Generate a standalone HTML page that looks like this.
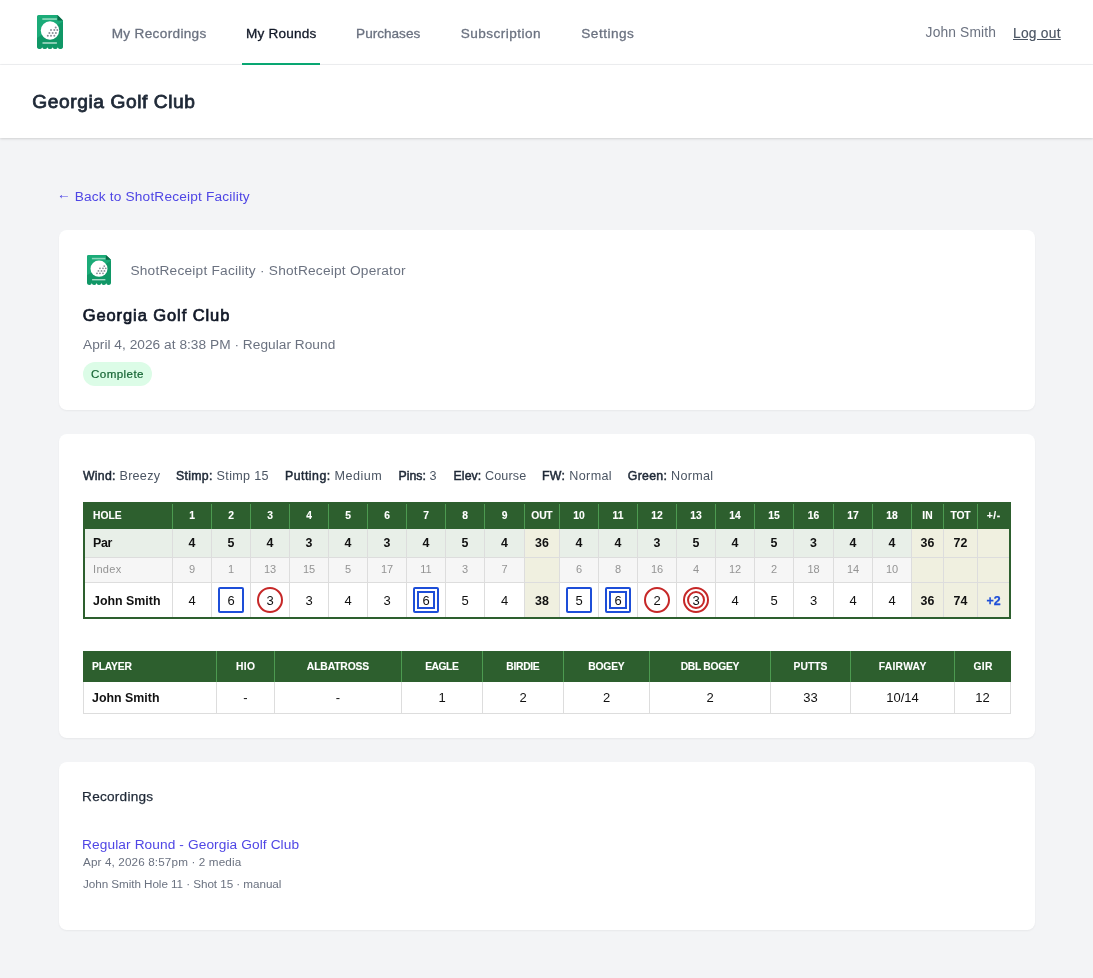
<!DOCTYPE html>
<html lang="en">
<head>
<meta charset="utf-8">
<title>Georgia Golf Club</title>
<style>
*{box-sizing:border-box;margin:0;padding:0}
html,body{width:1093px;height:978px;overflow:hidden}
body{font-family:"Liberation Sans",sans-serif;background:#f3f4f6;color:#111827;position:relative;will-change:transform}
a{text-decoration:none;color:inherit}
.t{position:absolute;white-space:nowrap;line-height:1}
/* NAV */
nav{position:absolute;left:0;top:0;width:1093px;height:65px;background:#fff;border-bottom:1px solid #f0f1f3}
.navlink{font-size:13.6px;color:#6b7280;-webkit-text-stroke-width:.3px}
.navlink.active{color:#111827}
.activebar{position:absolute;left:242px;top:63px;width:78px;height:2px;background:#0aa974}
/* HEADER */
header{position:absolute;left:0;top:65px;width:1093px;height:73px;background:#fff;box-shadow:0 1px 3px rgba(0,0,0,.10),0 1px 2px rgba(0,0,0,.06)}
.card{position:absolute;left:59px;width:976px;background:#fff;border-radius:8px;box-shadow:0 1px 2px rgba(0,0,0,.05)}

/* back link */
.back{font-size:13.7px;color:#4f46e5}
/* card1 */
#card1{top:230px;height:180px}
#card2{top:434px;height:304px}
#card3{top:762px;height:168px}
.muted{color:#6b7280}
.badge{position:absolute;left:24px;top:132px;width:69px;height:24px;border-radius:12px;background:#dcfce7}
/* conditions */
.cond{font-size:12.6px;color:#4b5563}
.cond b{color:#1f2937;font-size:12.3px}
/* scorecard */
.sc{position:absolute;left:24px;top:68px;width:928px;border:2px solid #2d5f2e;background:#fff}
.r{display:flex}
.c{flex:none;text-align:center;border-right:1px solid #ddd;white-space:nowrap;overflow:visible}
.c.first{text-align:left;padding-left:8px}
.c.last{border-right:0}
.sb,.cond b{font-weight:normal;-webkit-text-stroke-width:.5px}
.sc .hd .c,.st .hd .c{font-weight:bold;-webkit-text-stroke-width:.1px}
.sc .par .c,.sc .pl .c.first,.sc .pl .c.tot,.st .bd .c.first{font-weight:bold}
.sc .hd .c{height:25px;line-height:23px;background:#2d5f2e;color:#fff;font-size:10.3px;border-right-color:#4c9a50}
.sc .hd .c.last{border-right:0}
.sc .par .c{height:29px;line-height:28px;background:#e8efe8;font-size:12.4px;color:#111;border-bottom:1px solid #ddd}
.sc .idx .c{height:25px;line-height:22px;background:#f6f6f6;font-size:11px;color:#949494;border-bottom:1px solid #ddd}
.sc .pl .c{height:34px;line-height:34px;padding-top:1px;font-size:13px;color:#111;display:flex;align-items:center;justify-content:center}
.sc .pl .c.first{justify-content:flex-start}
.sc .pl .c.first,.sc .pl .c.tot,.st .bd .c.first{font-size:12.4px}
.sc .c.tot{background:#f0f0e0}
.sc .hd .c.tot{background:#2d5f2e}
.mk{display:flex;align-items:center;justify-content:center;width:26px;height:26px;margin-top:-1px;border:2px solid #1d4ed8;line-height:1}
.mk.sq{border-radius:2px}
.mk.ci{border-color:#c62828;border-radius:50%}
.in{display:flex;align-items:center;justify-content:center;width:18px;height:18px;border:2px solid #1d4ed8;line-height:1}
.in.ci{border-color:#c62828;border-radius:50%}
.sc .pl .c.pm{color:#1d4ed8;-webkit-text-stroke-width:.25px}
/* stats */
.st{position:absolute;left:24px;top:217px;width:928px}
.st .hd .c{height:31px;line-height:31px;background:#2d5f2e;color:#fff;font-size:10.3px;border-right-color:#4c9a50}
.st .hd .c.last{border-right:0}
.st .bd .c{height:32px;line-height:32px;font-size:13px;color:#111;border-bottom:1px solid #ddd}
.st .bd .c.first{border-left:1px solid #ddd;padding-left:8px}
.st .bd .c.last{border-right:1px solid #ddd}
.st .hd .c.first{padding-left:9px}
</style>
</head>
<body>
<svg width="0" height="0" style="position:absolute"><defs><symbol id="lg" viewBox="0 0 26 34">
    <path d="M1.5 0H20.5L26 5.5V31.5a2.6 2.45 0 0 1 -5.2 0a2.6 2.45 0 0 1 -5.2 0a2.6 2.45 0 0 1 -5.2 0a2.6 2.45 0 0 1 -5.2 0a2.6 2.45 0 0 1 -5.2 0V1.5Q0 0 1.5 0Z" fill="#1bab78"/>
    <path d="M0 23L26 6.5V31.5a2.6 2.45 0 0 1 -5.2 0a2.6 2.45 0 0 1 -5.2 0a2.6 2.45 0 0 1 -5.2 0a2.6 2.45 0 0 1 -5.2 0a2.6 2.45 0 0 1 -5.2 0Z" fill="#0c8f60" opacity=".72"/>
    <path d="M20.5 0L26 5.5H20.5Z" fill="#0a6a47"/>
    <rect x="5.3" y="3.2" width="14.6" height="1.7" fill="#8ad6ba"/>
    <rect x="5.5" y="27.2" width="14.4" height="1.6" fill="#a5d9c6"/>
    <circle cx="13" cy="15.5" r="9.2" fill="#fff"/>
    <g fill="#8a8f98">
      <circle cx="18.7" cy="12.5" r="1"/>
      <circle cx="14" cy="15.1" r="1"/><circle cx="17.3" cy="15.1" r="1"/><circle cx="20.3" cy="15.1" r="1"/>
      <circle cx="12.4" cy="18" r="1"/><circle cx="15.7" cy="18" r="1"/><circle cx="18.9" cy="18" r="1"/>
      <circle cx="10.8" cy="20.7" r="1"/><circle cx="14" cy="20.7" r="1"/><circle cx="17.3" cy="20.7" r="1"/>
    </g>
  </symbol></defs></svg>
<nav>
  <svg style="position:absolute;left:37px;top:15px" width="26" height="34" viewBox="0 0 26 34"><use href="#lg"/></svg>
  <a class="t navlink" id="n1" style="top:27px;left:111.7px;letter-spacing:0.33px">My Recordings</a>
  <a class="t navlink active" id="n2" style="top:27px;left:246px;letter-spacing:0.2px">My Rounds</a>
  <a class="t navlink" id="n3" style="top:27px;left:356.1px;letter-spacing:-0.01px">Purchases</a>
  <a class="t navlink" id="n4" style="top:27px;left:460.7px;letter-spacing:0.46px">Subscription</a>
  <a class="t navlink" id="n5" style="top:27px;left:581.3px;letter-spacing:0.48px">Settings</a>
  <div class="activebar"></div>
  <span class="t navlink" id="n6" style="top:26px;left:925.6px;letter-spacing:0.15px;font-size:13.8px;-webkit-text-stroke-width:0">John Smith</span>
  <a class="t navlink" id="n7" style="top:27px;left:1013px;color:#4b5563;text-decoration:underline;letter-spacing:0.25px;font-size:13.8px;-webkit-text-stroke-width:.15px">Log out</a>
</nav>
<header>
  <h2 class="t" id="h1" style="left:32.3px;top:27px;font-size:19.2px;font-weight:normal;-webkit-text-stroke:0.8px #1f2937;color:#1f2937;letter-spacing:0.57px">Georgia Golf Club</h2>
</header>

<a class="t back" id="bk" style="left:56.9px;top:190px;letter-spacing:0.17px"><span style="position:relative;top:-1.7px">←</span> Back to ShotReceipt Facility</a>
<section class="card" id="card1">
  <svg style="position:absolute;left:28px;top:25px" width="24" height="30" viewBox="0 0 26 34" preserveAspectRatio="none"><use href="#lg"/></svg>
  <span class="t muted" id="c1a" style="left:71.4px;top:34px;font-size:13.7px;letter-spacing:0.23px">ShotReceipt Facility · ShotReceipt Operator</span>
  <h3 class="t" id="c1b" style="left:23.7px;top:77px;font-size:16.5px;font-weight:normal;-webkit-text-stroke-width:.7px;color:#111827;letter-spacing:0.91px">Georgia Golf Club</h3>
  <span class="t muted" id="c1c" style="left:24px;top:108px;font-size:13.7px;letter-spacing:0.03px">April 4, 2026 at 8:38 PM · Regular Round</span>
  <div class="badge"></div>
  <span class="t" id="c1d" style="left:32px;top:138px;font-size:11.6px;color:#166534;letter-spacing:0.41px;-webkit-text-stroke-width:.2px">Complete</span>
</section>
<section class="card" id="card2">
  <span class="t cond" id="k1" style="top:36px;left:24px;letter-spacing:0.26px"><b>Wind:</b> Breezy</span>
  <span class="t cond" id="k2" style="top:36px;left:117px;letter-spacing:0.32px"><b>Stimp:</b> Stimp 15</span>
  <span class="t cond" id="k3" style="top:36px;left:226px;letter-spacing:0.49px"><b>Putting:</b> Medium</span>
  <span class="t cond" id="k4" style="top:36px;left:339.6px;letter-spacing:0px"><b>Pins:</b> 3</span>
  <span class="t cond" id="k5" style="top:36px;left:394.5px;letter-spacing:0.11px"><b>Elev:</b> Course</span>
  <span class="t cond" id="k6" style="top:36px;left:483px;letter-spacing:0.36px"><b>FW:</b> Normal</span>
  <span class="t cond" id="k7" style="top:36px;left:568.8px;letter-spacing:0.3px"><b>Green:</b> Normal</span>
<!--T0--><div class="sc">
<div class="r hd">
<div class="c first" style="width:88px"><span id="sh0">HOLE</span></div>
<div class="c" style="width:39px"><span id="sh1">1</span></div>
<div class="c" style="width:39px"><span id="sh2">2</span></div>
<div class="c" style="width:39px"><span id="sh3">3</span></div>
<div class="c" style="width:39px"><span id="sh4">4</span></div>
<div class="c" style="width:39px"><span id="sh5">5</span></div>
<div class="c" style="width:39px"><span id="sh6">6</span></div>
<div class="c" style="width:39px"><span id="sh7">7</span></div>
<div class="c" style="width:39px"><span id="sh8">8</span></div>
<div class="c" style="width:40px"><span id="sh9">9</span></div>
<div class="c tot" style="width:35px"><span id="sh10" style="letter-spacing:-0.2px;margin-right:0.2px">OUT</span></div>
<div class="c" style="width:39px"><span id="sh11">10</span></div>
<div class="c" style="width:39px"><span id="sh12">11</span></div>
<div class="c" style="width:39px"><span id="sh13">12</span></div>
<div class="c" style="width:39px"><span id="sh14">13</span></div>
<div class="c" style="width:39px"><span id="sh15">14</span></div>
<div class="c" style="width:39px"><span id="sh16">15</span></div>
<div class="c" style="width:40px"><span id="sh17">16</span></div>
<div class="c" style="width:39px"><span id="sh18">17</span></div>
<div class="c" style="width:39px"><span id="sh19">18</span></div>
<div class="c tot" style="width:32px"><span id="sh20">IN</span></div>
<div class="c tot" style="width:34px"><span id="sh21" style="letter-spacing:-0.1px;margin-right:0.1px">TOT</span></div>
<div class="c tot last" style="width:31px"><span id="sh22" style="letter-spacing:0.5px;margin-right:-0.5px">+/-</span></div>
</div>
<div class="r par">
<div class="c first" style="width:88px"><span id="sp0" style="letter-spacing:-0.3px;margin-right:0.3px">Par</span></div>
<div class="c" style="width:39px"><span id="sp1">4</span></div>
<div class="c" style="width:39px"><span id="sp2">5</span></div>
<div class="c" style="width:39px"><span id="sp3">4</span></div>
<div class="c" style="width:39px"><span id="sp4">3</span></div>
<div class="c" style="width:39px"><span id="sp5">4</span></div>
<div class="c" style="width:39px"><span id="sp6">3</span></div>
<div class="c" style="width:39px"><span id="sp7">4</span></div>
<div class="c" style="width:39px"><span id="sp8">5</span></div>
<div class="c" style="width:40px"><span id="sp9">4</span></div>
<div class="c tot" style="width:35px"><span id="sp10">36</span></div>
<div class="c" style="width:39px"><span id="sp11">4</span></div>
<div class="c" style="width:39px"><span id="sp12">4</span></div>
<div class="c" style="width:39px"><span id="sp13">3</span></div>
<div class="c" style="width:39px"><span id="sp14">5</span></div>
<div class="c" style="width:39px"><span id="sp15">4</span></div>
<div class="c" style="width:39px"><span id="sp16">5</span></div>
<div class="c" style="width:40px"><span id="sp17">3</span></div>
<div class="c" style="width:39px"><span id="sp18">4</span></div>
<div class="c" style="width:39px"><span id="sp19">4</span></div>
<div class="c tot" style="width:32px"><span id="sp20">36</span></div>
<div class="c tot" style="width:34px"><span id="sp21">72</span></div>
<div class="c tot last" style="width:31px"></div>
</div>
<div class="r idx">
<div class="c first" style="width:88px"><span id="si0" style="letter-spacing:0.34px;margin-right:-0.34px">Index</span></div>
<div class="c" style="width:39px"><span id="si1">9</span></div>
<div class="c" style="width:39px"><span id="si2">1</span></div>
<div class="c" style="width:39px"><span id="si3">13</span></div>
<div class="c" style="width:39px"><span id="si4">15</span></div>
<div class="c" style="width:39px"><span id="si5">5</span></div>
<div class="c" style="width:39px"><span id="si6">17</span></div>
<div class="c" style="width:39px"><span id="si7">11</span></div>
<div class="c" style="width:39px"><span id="si8">3</span></div>
<div class="c" style="width:40px"><span id="si9">7</span></div>
<div class="c tot" style="width:35px"></div>
<div class="c" style="width:39px"><span id="si11">6</span></div>
<div class="c" style="width:39px"><span id="si12">8</span></div>
<div class="c" style="width:39px"><span id="si13">16</span></div>
<div class="c" style="width:39px"><span id="si14">4</span></div>
<div class="c" style="width:39px"><span id="si15">12</span></div>
<div class="c" style="width:39px"><span id="si16">2</span></div>
<div class="c" style="width:40px"><span id="si17">18</span></div>
<div class="c" style="width:39px"><span id="si18">14</span></div>
<div class="c" style="width:39px"><span id="si19">10</span></div>
<div class="c tot" style="width:32px"></div>
<div class="c tot" style="width:34px"></div>
<div class="c tot last" style="width:31px"></div>
</div>
<div class="r pl">
<div class="c first" style="width:88px"><span id="sl0">John Smith</span></div>
<div class="c" style="width:39px"><span id="sl1">4</span></div>
<div class="c" style="width:39px"><span class="mk sq"><span id="sl2">6</span></span></div>
<div class="c" style="width:39px"><span class="mk ci"><span id="sl3">3</span></span></div>
<div class="c" style="width:39px"><span id="sl4">3</span></div>
<div class="c" style="width:39px"><span id="sl5">4</span></div>
<div class="c" style="width:39px"><span id="sl6">3</span></div>
<div class="c" style="width:39px"><span class="mk sq"><span class="in sq"><span id="sl7">6</span></span></span></div>
<div class="c" style="width:39px"><span id="sl8">5</span></div>
<div class="c" style="width:40px"><span id="sl9">4</span></div>
<div class="c tot" style="width:35px"><span id="sl10">38</span></div>
<div class="c" style="width:39px"><span class="mk sq"><span id="sl11">5</span></span></div>
<div class="c" style="width:39px"><span class="mk sq"><span class="in sq"><span id="sl12">6</span></span></span></div>
<div class="c" style="width:39px"><span class="mk ci"><span id="sl13">2</span></span></div>
<div class="c" style="width:39px"><span class="mk ci"><span class="in ci"><span id="sl14">3</span></span></span></div>
<div class="c" style="width:39px"><span id="sl15">4</span></div>
<div class="c" style="width:39px"><span id="sl16">5</span></div>
<div class="c" style="width:40px"><span id="sl17">3</span></div>
<div class="c" style="width:39px"><span id="sl18">4</span></div>
<div class="c" style="width:39px"><span id="sl19">4</span></div>
<div class="c tot" style="width:32px"><span id="sl20">36</span></div>
<div class="c tot" style="width:34px"><span id="sl21">74</span></div>
<div class="c tot last pm" style="width:31px"><span id="sl22">+2</span></div>
</div>
</div>
<div class="st">
<div class="r hd">
<div class="c first" style="width:134px"><span id="th0" style="letter-spacing:-0.18px;margin-right:0.18px">PLAYER</span></div>
<div class="c" style="width:58px"><span id="th1" style="letter-spacing:0.3px;margin-right:-0.3px">HIO</span></div>
<div class="c" style="width:127px"><span id="th2" style="letter-spacing:-0.13px;margin-right:0.13px">ALBATROSS</span></div>
<div class="c" style="width:81px"><span id="th3" style="letter-spacing:-0.45px;margin-right:0.45px">EAGLE</span></div>
<div class="c" style="width:81px"><span id="th4" style="letter-spacing:-0.29px;margin-right:0.29px">BIRDIE</span></div>
<div class="c" style="width:86px"><span id="th5" style="letter-spacing:-0.21px;margin-right:0.21px">BOGEY</span></div>
<div class="c" style="width:121px"><span id="th6" style="letter-spacing:-0.29px;margin-right:0.29px">DBL BOGEY</span></div>
<div class="c" style="width:80px"><span id="th7">PUTTS</span></div>
<div class="c" style="width:104px"><span id="th8" style="letter-spacing:0.3px;margin-right:-0.3px">FAIRWAY</span></div>
<div class="c last" style="width:56px"><span id="th9" style="letter-spacing:0.25px;margin-right:-0.25px">GIR</span></div>
</div>
<div class="r bd">
<div class="c first" style="width:134px"><span id="tb0">John Smith</span></div>
<div class="c" style="width:58px"><span id="tb1">-</span></div>
<div class="c" style="width:127px"><span id="tb2">-</span></div>
<div class="c" style="width:81px"><span id="tb3">1</span></div>
<div class="c" style="width:81px"><span id="tb4">2</span></div>
<div class="c" style="width:86px"><span id="tb5">2</span></div>
<div class="c" style="width:121px"><span id="tb6">2</span></div>
<div class="c" style="width:80px"><span id="tb7">33</span></div>
<div class="c" style="width:104px"><span id="tb8" style="letter-spacing:-0.01px;margin-right:0.01px">10/14</span></div>
<div class="c last" style="width:56px"><span id="tb9">12</span></div>
</div>
</div><!--T1-->
</section>
<section class="card" id="card3">
  <h3 class="t" id="r1" style="left:23.1px;top:28px;font-size:13.6px;font-weight:normal;color:#1f2937;letter-spacing:0.25px;-webkit-text-stroke-width:.25px">Recordings</h3>
  <a class="t" id="r2" style="left:23.1px;top:76px;font-size:13.7px;color:#4f46e5;letter-spacing:0.1px">Regular Round - Georgia Golf Club</a>
  <span class="t muted" id="r3" style="left:24px;top:94px;font-size:11.7px;letter-spacing:0.13px">Apr 4, 2026 8:57pm · 2 media</span>
  <span class="t muted" id="r4" style="left:24px;top:116px;font-size:11.7px;letter-spacing:-0.06px">John Smith Hole 11 · Shot 15 · manual</span>
</section>
</body>
</html>
